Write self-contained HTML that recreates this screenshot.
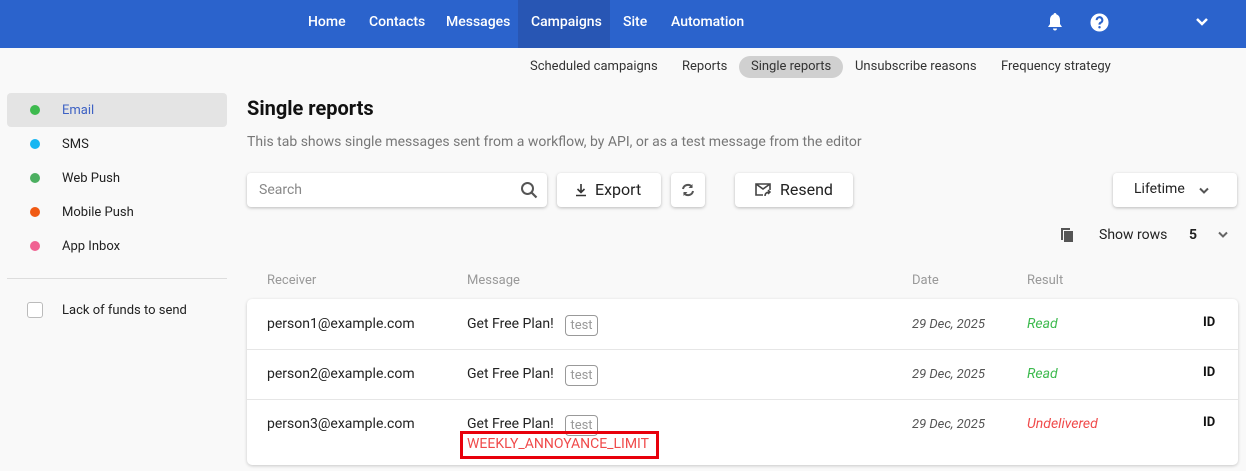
<!DOCTYPE html>
<html><head><meta charset="utf-8"><style>
*{margin:0;padding:0;box-sizing:border-box}
body{width:1246px;height:471px;background:#f9f9f9;font-family:"Roboto","Liberation Sans",sans-serif;color:#222;position:relative;overflow:hidden;font-size:13px}
.a{position:absolute;white-space:nowrap}
.nav{position:absolute;left:0;top:0;width:1246px;height:48px;background:#2b63cc}
.nav .a{color:#fff;font-size:14px;font-weight:500;top:14px}
.tab{font-size:13px;top:59px;color:#333}
.side{font-size:13px;color:#222}
.dot{position:absolute;width:10px;height:10px;border-radius:50%;left:30px}
.btn{position:absolute;background:#fff;border-radius:4px;box-shadow:0 1px 3px rgba(0,0,0,.25);top:173px;height:34px}
.hd{top:272px;color:#999;font-size:13px}
.cell{font-size:14px;color:#222}
.dt{font-style:italic;color:#555;font-size:13px}
.tag{position:absolute;left:565px;width:33px;height:21px;border:1px solid #999;border-radius:4px;color:#999;font-size:13px;text-align:center;line-height:19px}
.id{font-weight:bold;font-size:13px;left:1203px;color:#111}
</style></head><body>
<div class="nav">
<div style="position:absolute;left:518px;top:0;width:92px;height:48px;background:#2856b4"></div>
<span class="a" style="left:308px">Home</span>
<span class="a" style="left:369px">Contacts</span>
<span class="a" style="left:446px">Messages</span>
<span class="a" style="left:531px">Campaigns</span>
<span class="a" style="left:623px">Site</span>
<span class="a" style="left:671px">Automation</span>
<svg class="a" style="left:1046px;top:12px" width="18" height="20" viewBox="0 0 18 20"><path d="M9 1c1 0 1.4.8 1.4 1.4C13 3.2 14 5.5 14 8v4l2 3H2l2-3V8c0-2.5 1-4.8 3.6-5.6C7.6 1.8 8 1 9 1z M7 16.5h4c0 1.2-.9 2-2 2s-2-.8-2-2z" fill="#fff"/></svg>
<svg class="a" style="left:1090px;top:13px" width="19" height="19" viewBox="0 0 20 20"><circle cx="10" cy="10" r="9.5" fill="#fff"/><path d="M7 7.5a3 3 0 1 1 4.2 2.7c-.9.5-1.2 1-1.2 2" stroke="#2b63cc" stroke-width="2.2" fill="none"/><circle cx="10" cy="15" r="1.3" fill="#2b63cc"/></svg>
<svg class="a" style="left:1195px;top:17px" width="14" height="10" viewBox="0 0 14 10"><path d="M2 2l5 5 5-5" stroke="#fff" stroke-width="2.5" fill="none"/></svg>
</div>
<div class="a" style="left:739px;top:56px;width:104px;height:22px;border-radius:11px;background:#d0d0d0"></div>
<span class="a tab" style="left:530px">Scheduled campaigns</span>
<span class="a tab" style="left:682px">Reports</span>
<span class="a tab" style="left:751px">Single reports</span>
<span class="a tab" style="left:855px">Unsubscribe reasons</span>
<span class="a tab" style="left:1001px">Frequency strategy</span>

<div class="a" style="left:7px;top:93px;width:220px;height:34px;background:#e4e4e4;border-radius:4px"></div>
<div class="dot" style="top:105px;background:#3dba4e"></div><span class="a side" style="left:62px;top:103px;color:#3e62c4">Email</span>
<div class="dot" style="top:139px;background:#16b6f2"></div><span class="a side" style="left:62px;top:137px">SMS</span>
<div class="dot" style="top:173px;background:#4caf60"></div><span class="a side" style="left:62px;top:171px">Web Push</span>
<div class="dot" style="top:207px;background:#f05a14"></div><span class="a side" style="left:62px;top:205px">Mobile Push</span>
<div class="dot" style="top:241px;background:#f06292"></div><span class="a side" style="left:62px;top:239px">App Inbox</span>
<div class="a" style="left:7px;top:278px;width:220px;height:1px;background:#ddd"></div>
<div class="a" style="left:27px;top:302px;width:16px;height:16px;border:1px solid #bbb;border-radius:3px;background:#fff"></div>
<span class="a side" style="left:62px;top:303px">Lack of funds to send</span>

<span class="a" style="left:247px;top:96px;font-size:20px;font-weight:bold;color:#111">Single reports</span>
<span class="a" style="left:247px;top:134px;font-size:14px;color:#777">This tab shows single messages sent from a workflow, by API, or as a test message from the editor</span>

<div class="btn" style="left:247px;width:300px"><span class="a" style="left:12px;top:9px;font-size:14px;color:#888">Search</span>
<svg class="a" style="left:273px;top:8px" width="18" height="18" viewBox="0 0 18 18"><circle cx="7.5" cy="7.5" r="5.5" stroke="#555" stroke-width="2" fill="none"/><path d="M11.5 11.5l5 5" stroke="#555" stroke-width="2.2"/></svg></div>
<div class="btn" style="left:557px;width:104px"><svg class="a" style="left:18px;top:10px" width="12" height="14" viewBox="0 0 12 14"><path d="M6 1v8M2.5 6L6 9.5 9.5 6M1 12.5h10" stroke="#333" stroke-width="1.6" fill="none"/></svg><span class="a" style="left:38px;top:7px;font-size:16px;color:#222">Export</span></div>
<div class="btn" style="left:671px;width:34px"><svg class="a" style="left:10px;top:10px" width="14" height="14" viewBox="0 0 14 14"><path d="M2 6a5 5 0 0 1 9-2M12 8a5 5 0 0 1-9 2" stroke="#555" stroke-width="2" fill="none"/><path d="M11.5 1v4h-4zM2.5 13V9h4z" fill="#555"/></svg></div>
<div class="btn" style="left:735px;width:118px"><svg class="a" style="left:19px;top:9px" width="18" height="16" viewBox="0 0 18 16"><path d="M9 13H2V2h14v6M2 2l7 5 7-5" stroke="#444" stroke-width="1.6" fill="none"/><path d="M11 14c0-3 2-4 5-4M14 8l2 2-2 2" stroke="#444" stroke-width="1.5" fill="none"/></svg><span class="a" style="left:45px;top:7px;font-size:16px;color:#222">Resend</span></div>
<div class="btn" style="left:1113px;width:124px"><span class="a" style="left:21px;top:8px;font-size:14px;color:#222">Lifetime</span><svg class="a" style="left:85px;top:14px" width="12" height="8" viewBox="0 0 12 8"><path d="M2 1.5l4 4 4-4" stroke="#555" stroke-width="2" fill="none"/></svg></div>

<svg class="a" style="left:1060px;top:227px" width="14" height="15" viewBox="0 0 14 15"><path d="M1 1h9v2H3v10H1z" fill="#555"/><rect x="4" y="4" width="9" height="11" fill="#555"/></svg>
<span class="a" style="left:1099px;top:227px;font-size:14px;color:#222">Show rows</span>
<span class="a" style="left:1189px;top:227px;font-size:14px;font-weight:bold">5</span>
<svg class="a" style="left:1217px;top:231px" width="12" height="8" viewBox="0 0 12 8"><path d="M2 1.5l4 4 4-4" stroke="#666" stroke-width="2" fill="none"/></svg>

<span class="a hd" style="left:267px;top:273px">Receiver</span>
<span class="a hd" style="left:467px;top:273px">Message</span>
<span class="a hd" style="left:912px;top:273px">Date</span>
<span class="a hd" style="left:1027px;top:273px">Result</span>

<div class="a" style="left:247px;top:299px;width:991px;height:166px;background:#fff;border-radius:5px;box-shadow:0 1px 3px rgba(0,0,0,.2)"></div>
<div class="a" style="left:247px;top:349px;width:991px;height:1px;background:#e6e6e6"></div>
<div class="a" style="left:247px;top:399px;width:991px;height:1px;background:#e6e6e6"></div>

<span class="a cell" style="left:267px;top:316px">person1@example.com</span>
<span class="a cell" style="left:467px;top:316px">Get Free Plan!</span><div class="tag" style="top:315px">test</div>
<span class="a dt" style="left:912px;top:317px">29 Dec, 2025</span>
<span class="a dt" style="left:1027px;top:316px;color:#3dba4e;font-size:14px">Read</span>
<span class="a id" style="top:315px">ID</span>

<span class="a cell" style="left:267px;top:366px">person2@example.com</span>
<span class="a cell" style="left:467px;top:366px">Get Free Plan!</span><div class="tag" style="top:365px">test</div>
<span class="a dt" style="left:912px;top:367px">29 Dec, 2025</span>
<span class="a dt" style="left:1027px;top:366px;color:#3dba4e;font-size:14px">Read</span>
<span class="a id" style="top:365px">ID</span>

<span class="a cell" style="left:267px;top:416px">person3@example.com</span>
<span class="a cell" style="left:467px;top:416px">Get Free Plan!</span><div class="tag" style="top:415px">test</div>
<span class="a dt" style="left:912px;top:417px">29 Dec, 2025</span>
<span class="a dt" style="left:1027px;top:416px;color:#f04a4a;font-size:14px">Undelivered</span>
<span class="a id" style="top:415px">ID</span>
<div class="a" style="left:460px;top:431px;width:199px;height:28px;border:3px solid #e8000b"></div>
<span class="a" style="left:467px;top:436px;font-size:14px;color:#f04a4a">WEEKLY_ANNOYANCE_LIMIT</span>
</body></html>
